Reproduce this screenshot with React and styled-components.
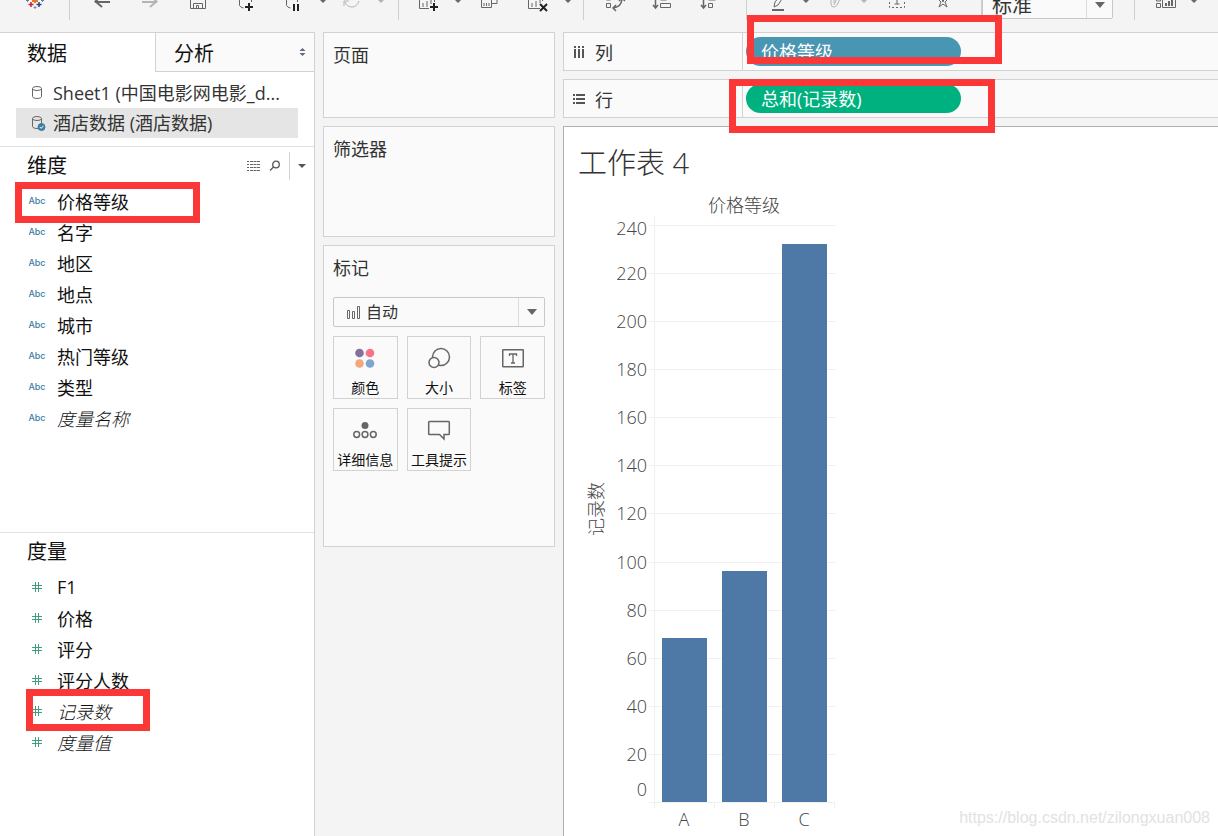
import React from "react";
import styled, { createGlobalStyle } from "styled-components";

const GlobalStyle = createGlobalStyle`
  * { box-sizing: border-box; }
  body { margin: 0; background: #f4f4f4; }
  body, button, select {
    font-family: "Open Sans", "Noto Sans CJK SC", sans-serif;
    font-weight: 400;
  }
  button, select { cursor: pointer; }
  ul { list-style: none; margin: 0; padding: 0; }
  h1, h2, h3, p { margin: 0; font-weight: 400; }
`;

const Page = styled.div`
  display: flex;
  flex-direction: column;
  min-height: 100vh;
  color: #333;
  overflow: hidden;
`;

/* ---------- toolbar ---------- */

const Toolbar = styled.header`
  display: flex;
  align-items: flex-start;
  height: 32px;
  overflow: hidden;
`;

const ToolButton = styled.button`
  flex: none;
  display: flex;
  justify-content: center;
  width: ${(p) => p.$w || 48}px;
  height: 32px;
  padding: 0;
  border: 0;
  background: none;
  color: ${(p) => (p.disabled ? "#b4b4b4" : "#666")};
`;

const ToolIcon = styled.svg`
  flex: none;
  width: 32px;
  height: 32px;
  fill: none;
  stroke: currentColor;
  stroke-width: ${(p) => p.$stroke || 1};
`;

const Separator = styled.span`
  flex: none;
  width: 1px;
  height: 20px;
  margin: 0 ${(p) => p.$after}px 0 ${(p) => p.$before}px;
  background: #cfcfcf;
`;

const ToolCaret = ({ disabled, label }) => (
  <ToolButton $w={10} disabled={disabled} aria-label={label}>
    <svg width="10" height="32" viewBox="0 0 10 32">
      <path d="M2 0h6L5 3z" fill="currentColor" />
    </svg>
  </ToolButton>
);

const Tool = ({ label, w, stroke, disabled, children }) => (
  <ToolButton $w={w} disabled={disabled} aria-label={label}>
    <ToolIcon viewBox="-16 0 32 32" $stroke={stroke}>
      {children}
    </ToolIcon>
  </ToolButton>
);

const SelectBox = styled.label`
  position: relative;
  flex: none;
  display: block;
  width: ${(p) => p.$w || "100%"};
  height: ${(p) => p.$h}px;
  margin-top: ${(p) => p.$lift || 0}px;
  border: 1px solid #c8c8c8;
  border-radius: 2px;
  background: #fafafa;
`;

const NativeSelect = styled.select`
  appearance: none;
  width: 100%;
  height: 100%;
  border: 0;
  padding: 0 32px 0 ${(p) => p.$pad}px;
  background: transparent;
  color: #333;
  font-size: ${(p) => p.$size}px;
`;

const SelectArrow = styled.span`
  position: absolute;
  top: 0;
  right: 0;
  bottom: 0;
  width: 26px;
  display: grid;
  place-items: center;
  border-left: 1px solid #dcdcdc;
  pointer-events: none;
`;

const SelectLead = styled.svg`
  position: absolute;
  left: 13px;
  top: 8px;
  pointer-events: none;
`;

const ArrowGlyph = () => (
  <svg width="12" height="6" viewBox="0 0 12 6">
    <path d="M1 0h10L6 6z" fill="#666" />
  </svg>
);

/* ---------- workspace ---------- */

const Workspace = styled.div`
  flex: 1;
  display: flex;
  gap: 8px;
`;

const SidePane = styled.aside`
  flex: none;
  display: flex;
  flex-direction: column;
  width: 315px;
  border-top: 1px solid #d2d2d2;
  border-right: 1px solid #d2d2d2;
  background: #fff;
  color: #111;
`;

const Tabs = styled.div`
  display: flex;
  height: 39px;
`;

const Tab = styled.button`
  display: flex;
  align-items: center;
  justify-content: space-between;
  flex: ${(p) => (p.$active ? "0 0 155px" : "1")};
  padding: 0 8px 0 ${(p) => (p.$active ? 27 : 18)}px;
  border: 0 solid #d2d2d2;
  border-width: ${(p) => (p.$active ? "0" : "0 0 1px 1px")};
  background: ${(p) => (p.$active ? "#fff" : "#fafafa")};
  color: #111;
  font-size: 20px;
`;

const SourceList = styled.ul`
  padding: 6px 16px 8px;
  border-bottom: 1px solid #e2e2e2;
`;

const Source = styled.li`
  display: flex;
  align-items: center;
  gap: 7px;
  height: 30px;
  padding-left: 14px;
  background: ${(p) => (p.$active ? "#e5e5e5" : "transparent")};
  color: #333;
  font-size: 18px;
  line-height: 28px;
  white-space: nowrap;
`;

const FieldSection = styled.section`
  min-height: ${(p) => p.$min || 0}px;
  flex: ${(p) => (p.$min ? "none" : "1")};
  & + & { border-top: 1px solid #e2e2e2; }
`;

const SectionHead = styled.div`
  display: flex;
  align-items: center;
  justify-content: space-between;
  height: 38px;
  padding: 0 1px 0 27px;
`;

const SectionTitle = styled.h2`
  font-size: 20px;
  line-height: 30px;
`;

const HeadTools = styled.div`
  display: flex;
  align-items: center;
  gap: 8px;
`;

const HeadButton = styled.button`
  display: grid;
  place-items: center;
  width: ${(p) => p.$w || 13}px;
  height: 28px;
  padding: 0;
  border: 0 solid #d2d2d2;
  border-left-width: ${(p) => (p.$divided ? 1 : 0)}px;
  background: none;
`;

const Field = styled.li`
  position: relative;
  display: flex;
  align-items: center;
  height: 31px;
  padding-left: 26px;
  font-size: 18px;
  font-style: ${(p) => (p.$italic ? "italic" : "normal")};
  font-weight: ${(p) => (p.$italic ? 300 : 400)};
  white-space: nowrap;
`;

const FieldType = styled.span`
  display: flex;
  justify-content: center;
  width: 22px;
  margin-right: 9px;
  color: #3b7d9f;
  font-family: Inter, sans-serif;
  font-size: 9px;
  font-style: normal;
  font-weight: 500;
`;

const Highlight = styled.span`
  position: absolute;
  z-index: 2;
  left: ${(p) => p.$x}px;
  top: ${(p) => p.$y}px;
  width: ${(p) => p.$w}px;
  height: ${(p) => p.$h}px;
  border: 7px solid #fc3737;
  pointer-events: none;
`;

/* ---------- cards ---------- */

const Cards = styled.div`
  flex: none;
  display: flex;
  flex-direction: column;
  gap: 8px;
  width: 232px;
`;

const Card = styled.section`
  min-height: ${(p) => p.$min}px;
  padding: 8px 9px;
  border: 1px solid #d2d2d2;
  background: #fafafa;
`;

const CardTitle = styled.h3`
  font-size: 18px;
  line-height: 28px;
`;

const MarkControls = styled.div`
  display: flex;
  flex-direction: column;
  gap: 9px;
  padding-top: 15px;
`;

const MarkGrid = styled.div`
  display: grid;
  grid-template-columns: repeat(3, 1fr);
  gap: 9px;
`;

const MarkButton = styled.button`
  display: flex;
  flex-direction: column;
  align-items: center;
  justify-content: space-between;
  height: 63px;
  padding: 8px 0 0;
  border: 1px solid #d2d2d2;
  background: #fafafa;
  color: #111;
  font-size: 14px;
  line-height: 20px;
  white-space: nowrap;
`;

/* ---------- view ---------- */

const View = styled.main`
  flex: 1;
  min-width: 0;
  display: flex;
  flex-direction: column;
  gap: 8px;
`;

const Shelf = styled.section`
  display: flex;
  height: 39px;
  border: 1px solid #d2d2d2;
  border-right: 0;
  background: #fafafa;
`;

const ShelfName = styled.h2`
  flex: none;
  display: flex;
  align-items: center;
  gap: 9px;
  width: 179px;
  padding-left: 8px;
  border-right: 1px solid #d2d2d2;
  font-size: 18px;
`;

const ShelfSlot = styled.div`
  position: relative;
  flex: 1;
  display: flex;
  align-items: center;
  padding-left: 3px;
`;

const Pill = styled.button`
  width: 215px;
  height: 29px;
  padding: 0 15px;
  border: 0;
  border-radius: 15px;
  background: ${(p) => p.$color};
  color: #fff;
  font-size: 18px;
  line-height: 26px;
  text-align: left;
`;

const Sheet = styled.section`
  position: relative;
  flex: 1;
  padding: 14px 0 0 14px;
  border: 0 solid #b0b0b0;
  border-width: 1px 0 0 1px;
  background: #fff;
`;

const SheetTitle = styled.h1`
  font-size: 29px;
  font-weight: 300;
  line-height: 43px;
`;

const Chart = styled.svg`
  display: block;
  font-size: 18px;
  font-weight: 300;
  fill: #444;
`;

const Watermark = styled.p`
  position: absolute;
  right: 8px;
  bottom: 8px;
  color: #e2e2e2;
  font-family: "Liberation Sans", sans-serif;
  font-size: 16px;
  line-height: 20px;
`;

/* ---------- icons ---------- */

const Cylinder = ({ checked }) => (
  <svg width="16" height="16" viewBox="0 0 16 16" fill="none" stroke="#666">
    <path d="M2.500 3.500v8c0 1 2 2 4.500 2s4.500-1 4.500-2v-8" />
    <ellipse cx="7" cy="3.500" rx="4.500" ry="2" />
    {checked && (
      <>
        <circle cx="11.500" cy="12" r="3.500" fill="#3b7fa3" stroke="#3b7fa3" />
        <path d="M9.800 12l1.400 1.400 2.200-2.600" stroke="#fff" />
      </>
    )}
  </svg>
);

const HashIcon = () => (
  <svg width="12" height="12" viewBox="0 0 12 12" stroke="#3f9f7c" fill="none">
    <path d="M4.500 1v10M7.500 1v10M1 4.500h10M1 7.500h10" />
  </svg>
);

const ColorIcon = () => (
  <svg width="26" height="26" viewBox="0 0 26 26">
    <circle cx="7.500" cy="8" r="4.300" fill="#86709b" />
    <circle cx="18" cy="8" r="4.300" fill="#fb7284" />
    <circle cx="7.500" cy="18.500" r="4.300" fill="#f3a77c" />
    <circle cx="18" cy="18.500" r="4.300" fill="#80a4cd" />
  </svg>
);

const SizeIcon = () => (
  <svg width="26" height="26" viewBox="0 0 26 26" fill="#fafafa" stroke="#666" strokeWidth="1.500">
    <circle cx="15" cy="12" r="8.500" />
    <circle cx="8" cy="17.500" r="5" />
  </svg>
);

const LabelIcon = () => (
  <svg width="26" height="26" viewBox="0 0 26 26" fill="none" stroke="#666" strokeWidth="1.500">
    <rect x="2.750" y="4.750" width="20.500" height="17" rx="0.500" />
    <path d="M9.500 11V9h7v2M13 9v9M11 18h4" strokeWidth="1.300" />
  </svg>
);

const DetailIcon = () => (
  <svg width="26" height="26" viewBox="0 0 26 26" fill="none" stroke="#666" strokeWidth="1.500">
    <circle cx="13" cy="8.500" r="3.500" fill="#666" stroke="none" />
    <circle cx="4.700" cy="17.500" r="2.900" />
    <circle cx="13" cy="17.500" r="2.900" />
    <circle cx="21.300" cy="17.500" r="2.900" />
  </svg>
);

const TooltipIcon = () => (
  <svg width="26" height="26" viewBox="0 0 26 26" fill="none" stroke="#666" strokeWidth="1.500">
    <path d="M3.500 4.500h19q.8 0 .8.800v11.400q0 .8-.8.800H18v4.500l-4.500-4.500h-10q-.8 0-.8-.8V5.300q0-.8.800-.8z" />
  </svg>
);

const ColumnsIcon = () => (
  <svg width="14" height="14" viewBox="0 0 14 14" fill="#555">
    {[2, 6, 10].map((x) => (
      <path key={x} d={`M${x} 1h2v2h-2zM${x} 4h2v9h-2z`} />
    ))}
  </svg>
);

const RowsIcon = () => (
  <svg width="14" height="14" viewBox="0 0 14 14" fill="#555">
    {[2, 6, 10].map((y) => (
      <path key={y} d={`M1 ${y}h2v2h-2zM4 ${y}h9v2h-9z`} />
    ))}
  </svg>
);

/* ---------- data ---------- */

const dimensions = [
  { name: "价格等级", mark: true },
  { name: "名字" },
  { name: "地区" },
  { name: "地点" },
  { name: "城市" },
  { name: "热门等级" },
  { name: "类型" },
  { name: "度量名称", italic: true },
];

const measures = [
  { name: "F1" },
  { name: "价格" },
  { name: "评分" },
  { name: "评分人数" },
  { name: "记录数", italic: true, mark: true },
  { name: "度量值", italic: true },
];

const marks = [
  { name: "颜色", Icon: ColorIcon },
  { name: "大小", Icon: SizeIcon },
  { name: "标签", Icon: LabelIcon },
  { name: "详细信息", Icon: DetailIcon },
  { name: "工具提示", Icon: TooltipIcon },
];

const bars = [
  { name: "A", value: 68 },
  { name: "B", value: 96 },
  { name: "C", value: 232 },
];

const scale = Array.from({ length: 13 }, (_, i) => i * 20);
const BASE = 618;
const yOf = (v) => Math.round(BASE - v * 2.405);
const labelY = (v) => (v === 0 ? BASE - 6 : v === 240 ? yOf(v) + 10 : yOf(v) + 7);

const BarChart = () => (
  <Chart width="270" height="652" viewBox="0 0 270 652" role="img" aria-label="价格等级 / 记录数">
    <text x="166" y="28" textAnchor="middle">价格等级</text>
    <text transform="translate(25 325) rotate(-90)" textAnchor="middle">记录数</text>
    {scale.map((v) => (
      <g key={v}>
        <rect x="71" y={yOf(v)} width="186" height="1" fill="#f0f0f0" />
        <text x="69" y={labelY(v)} textAnchor="end">{v}</text>
      </g>
    ))}
    <rect x="76" y="32" width="1" height="592" fill="#f0f0f0" />
    {bars.map((b, i) => (
      <g key={b.name}>
        <rect x={136 + i * 60} y={BASE} width="1" height="6" fill="#f0f0f0" />
        <rect x={84 + i * 60} y={yOf(b.value)} width="45" height={BASE - yOf(b.value)} fill="#4e79a7" />
        <text x={106 + i * 60} y="642" textAnchor="middle">{b.name}</text>
      </g>
    ))}
  </Chart>
);

export default function App() {
  return (
    <Page>
      <GlobalStyle />
      <Toolbar>
        <Tool label="Tableau" w={69}>
          <path d="M0-2v5M-3 1h6" stroke="#eb762b" strokeWidth="2" />
          <path d="M-4 2v5M-6.500 4.500h5" stroke="#c72037" strokeWidth="1.500" />
          <path d="M4 2v5M1.500 4.500h5" stroke="#1f447e" strokeWidth="1.500" />
          <path d="M-7.500-2v4M-9 .5h3M7.500-2v4M6 .5h3" stroke="#5b879b" />
          <path d="M0 6v3M-1.500 7.500h3" stroke="#7c86b8" />
        </Tool>
        <Separator $before={0} $after={8} />
        <Tool label="后退" stroke={2}><path d="M-7 2H8M0-5l-7 7" /><path d="M-7 1l7 6" /></Tool>
        <Tool label="前进" stroke={2} disabled><path d="M-8 2H7M0-5l7 7" /><path d="M7 1L0 7" /></Tool>
        <Tool label="保存"><path d="M-7.500-4V8.500h15V-4M-4.500 8V3.500h9V8M-1.500 8V5.500h2V8" /></Tool>
        <Tool label="新建数据源">
          <path d="M-6.500-3V5.500q1 2 4 2.500M5.500-3V2" />
          <path d="M3 3v8M-1 7h8" stroke="#222" strokeWidth="2" />
        </Tool>
        <Tool label="暂停更新">
          <path d="M-7.500-3V5.500q1 2 4 2.500M3.500-3V2" />
          <path d="M0 4v7M4 4v7" stroke="#222" strokeWidth="2" />
        </Tool>
        <ToolCaret label="暂停更新选项" />
        <Tool label="刷新" disabled><path d="M7 1q-2 6-7 6-5 0-7-5M-8 6v-5h5M4-2h4" /></Tool>
        <ToolCaret label="刷新选项" disabled />
        <Separator $before={12} $after={6} />
        <Tool label="新建工作表">
          <path d="M-9.500-2V8.500H0M5.500-2v4M-6 7V3M-2 7V1M2 4V-2" />
          <path d="M5 3v8M1 7h8" stroke="#222" strokeWidth="2" />
        </Tool>
        <ToolCaret label="新建选项" />
        <Tool label="复制工作表" w={52}>
          <path d="M-7.500-2V7.500h10V-2M2 3.500h6V-2M-5 6V3M-2.500 6V3M0 6V3" />
        </Tool>
        <Tool label="清除工作表">
          <path d="M-10.500-2V8.500H1M3.500-2v3M-7 7V3M-3 7V1M1 3V-2" />
          <path d="M1 4l7 7M8 4l-7 7" stroke="#222" strokeWidth="2" />
        </Tool>
        <ToolCaret label="清除选项" />
        <Separator $before={10} $after={6} />
        <Tool label="交换行和列">
          <path d="M-7.500 3.500h4v4h-4zM-7.500-3v3h4v-3" />
          <path d="M8-2Q8 7-1 8M2 5l-3 3 3 3M5 1l3-3 3 3" strokeWidth="1.500" />
        </Tool>
        <Tool label="升序排序">
          <path d="M-6.500-2V7M-9 5l2.500 3L-4 5" strokeWidth="1.500" />
          <path d="M-1.500 3.500h10v4h-10zM-1.500-2v2h6v-2" />
        </Tool>
        <Tool label="降序排序">
          <path d="M-6.500-2V7M-9 5l2.500 3L-4 5" strokeWidth="1.500" />
          <path d="M-1.500 3.500h4v4h-4zM-1.500-2v2h7v-2" />
        </Tool>
        <Separator $before={12} $after={8} />
        <Tool label="突出显示" w={46}>
          <path d="M-4 7l1-5 5-6M-4 7l4-2 4-6" />
          <path d="M-6 10H6" strokeWidth="2" />
        </Tool>
        <ToolCaret label="突出显示选项" />
        <Tool label="组成员" disabled><path d="M-4-1v5q0 3 3 3 2 0 3-2L6-3M-1-2v5M2-2l-3 7" /></Tool>
        <ToolCaret label="组选项" disabled />
        <Tool label="显示标记标签" w={56}>
          <path d="M-7.500-2V7.500h15V-2" strokeDasharray="2 2" />
          <path d="M0-2v6M-2.500 4h5" />
        </Tool>
        <Tool label="固定" w={36}><path d="M-5-1h4l1 3 1-3h4L2 2l2 5-4-3-4 3 2-5z" /></Tool>
        <Separator $before={20} $after={0} />
        <SelectBox $w="131px" $h={28} $lift={-9}>
          <NativeSelect aria-label="适合" $pad={9} $size={20} defaultValue="标准">
            <option>标准</option>
          </NativeSelect>
          <SelectArrow><ArrowGlyph /></SelectArrow>
        </SelectBox>
        <Separator $before={21} $after={8} />
        <Tool label="显示/隐藏卡" w={46}>
          <path d="M-9.500 3.500h4v4h-4zM-9.500-2v3h4v-3M-3.500-2V7.500h13V-2" />
          <path d="M0 6V3M3 6V1M6 6V-1" strokeWidth="2" />
        </Tool>
        <ToolCaret label="卡选项" />
      </Toolbar>

      <Workspace>
        <SidePane>
          <Tabs>
            <Tab $active>数据</Tab>
            <Tab>
              分析
              <svg width="7" height="8" viewBox="0 0 7 8" fill="#5e6b7a">
                <path d="M3.500 0L6.500 3h-6zM3.500 8L.5 5h6z" />
              </svg>
            </Tab>
          </Tabs>
          <SourceList>
            <Source><Cylinder />Sheet1 (中国电影网电影_d...</Source>
            <Source $active><Cylinder checked />酒店数据 (酒店数据)</Source>
          </SourceList>

          <FieldSection $min={385}>
            <SectionHead>
              <SectionTitle>维度</SectionTitle>
              <HeadTools>
                <HeadButton aria-label="查看数据">
                  <svg width="13" height="10" viewBox="0 0 13 10" stroke="#666">
                    <path d="M0 .5h2M0 3.500h2M0 6.500h2M0 9.500h2" />
                    <path d="M3 .5h10M3 3.500h10M3 6.500h10M3 9.500h10" strokeDasharray="3 .5" />
                  </svg>
                </HeadButton>
                <HeadButton aria-label="查找字段">
                  <svg width="12" height="12" viewBox="0 0 12 12" fill="none" stroke="#555" strokeWidth="1.300">
                    <circle cx="7" cy="4.500" r="3.300" />
                    <path d="M4.500 7L1 10.500" />
                  </svg>
                </HeadButton>
                <HeadButton $divided $w={24} aria-label="菜单">
                  <svg width="8" height="4" viewBox="0 0 8 4">
                    <path d="M0 0h8L4 4z" fill="#555" />
                  </svg>
                </HeadButton>
              </HeadTools>
            </SectionHead>
            <ul>
              {dimensions.map((f) => (
                <Field key={f.name} $italic={f.italic}>
                  <FieldType>Abc</FieldType>
                  {f.name}
                  {f.mark && <Highlight $x={15} $y={-3} $w={185} $h={41} />}
                </Field>
              ))}
            </ul>
          </FieldSection>

          <FieldSection>
            <SectionHead>
              <SectionTitle>度量</SectionTitle>
            </SectionHead>
            <ul>
              {measures.map((f) => (
                <Field key={f.name} $italic={f.italic}>
                  <FieldType><HashIcon /></FieldType>
                  {f.name}
                  {f.mark && <Highlight $x={26} $y={-6} $w={124} $h={42} />}
                </Field>
              ))}
            </ul>
          </FieldSection>
        </SidePane>

        <Cards>
          <Card $min={86}><CardTitle>页面</CardTitle></Card>
          <Card $min={111}><CardTitle>筛选器</CardTitle></Card>
          <Card $min={302}>
            <CardTitle>标记</CardTitle>
            <MarkControls>
              <SelectBox $h={30}>
                <SelectLead width="14" height="13" viewBox="0 0 14 13" fill="none" stroke="#666">
                  <path d="M.5 4.500h2v8h-2zM5.500 5.500h2v7h-2zM10.500.5h2v12h-2z" />
                </SelectLead>
                <NativeSelect aria-label="标记类型" $pad={32} $size={16} defaultValue="自动">
                  <option>自动</option>
                </NativeSelect>
                <SelectArrow><ArrowGlyph /></SelectArrow>
              </SelectBox>
              <MarkGrid>
                {marks.map(({ name, Icon }) => (
                  <MarkButton key={name}><Icon />{name}</MarkButton>
                ))}
              </MarkGrid>
            </MarkControls>
          </Card>
        </Cards>

        <View>
          <Shelf>
            <ShelfName><ColumnsIcon />列</ShelfName>
            <ShelfSlot>
              <Pill $color="#4996b2">价格等级</Pill>
              <Highlight $x={4} $y={-18} $w={255} $h={49} />
            </ShelfSlot>
          </Shelf>
          <Shelf>
            <ShelfName><RowsIcon />行</ShelfName>
            <ShelfSlot>
              <Pill $color="#00b180">总和(记录数)</Pill>
              <Highlight $x={-14} $y={-1} $w={266} $h={54} />
            </ShelfSlot>
          </Shelf>
          <Sheet>
            <SheetTitle>工作表 4</SheetTitle>
            <BarChart />
            <Watermark>https://blog.csdn.net/zilongxuan008</Watermark>
          </Sheet>
        </View>
      </Workspace>
    </Page>
  );
}
